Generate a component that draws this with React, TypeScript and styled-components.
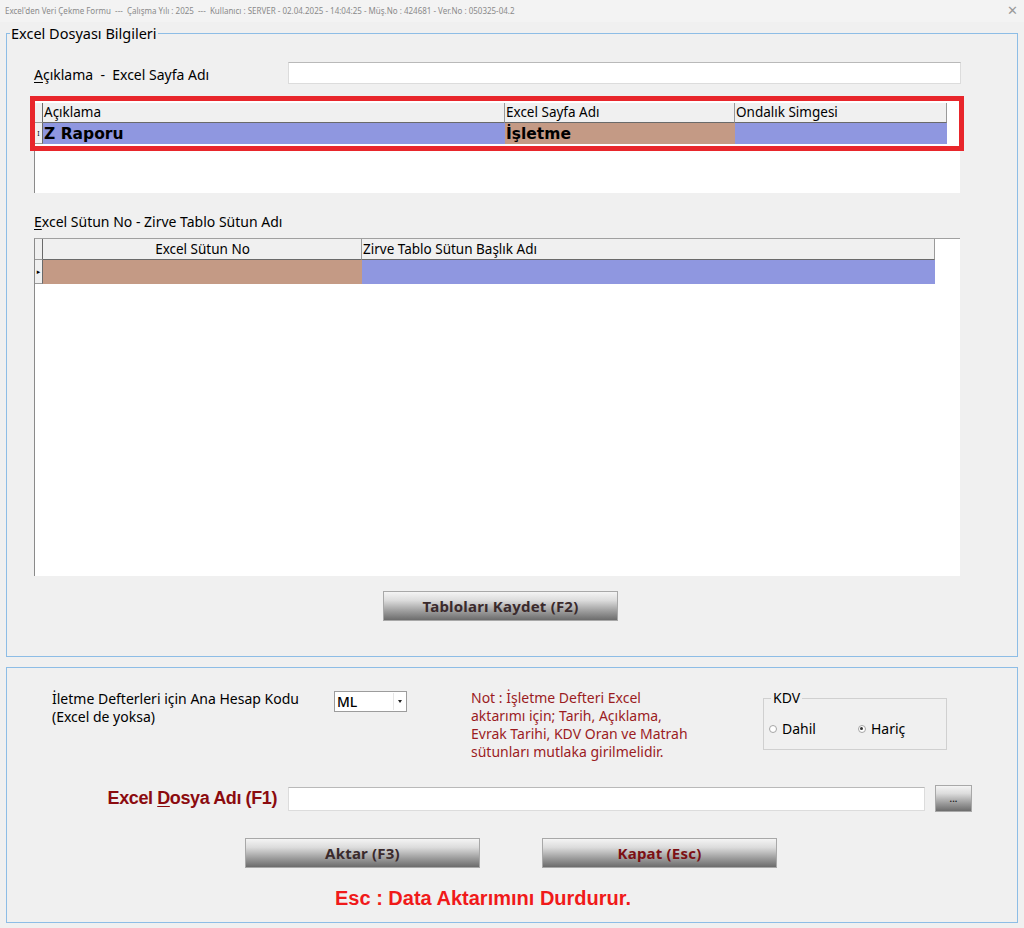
import styled, { createGlobalStyle } from "styled-components";

const GlobalStyle = createGlobalStyle`
  html, body {
    margin: 0;
    padding: 0;
    background: #f0f0f0;
  }
  body {
    font-family: "Noto Sans", "DejaVu Sans", sans-serif;
    color: #000;
  }
`;

const Window = styled.div`
  width: 1024px;
  height: 928px;
  background: #f0f0f0;
  display: flex;
  flex-direction: column;
  overflow: hidden;
`;

const TitleBar = styled.div`
  height: 22px;
  display: flex;
  align-items: center;
  justify-content: space-between;
  padding: 0 6px 2px 5px;
  background: #f3f3f3;
  box-sizing: border-box;
`;

const TitleText = styled.span`
  font-size: 8px;
  color: #8a8a8a;
  white-space: pre;
`;

const CloseX = styled.span`
  font-size: 13px;
  color: #9a9a9a;
  font-family: "DejaVu Sans", sans-serif;
`;

const Content = styled.div`
  padding: 0 6px;
  display: flex;
  flex-direction: column;
`;

const Group = styled.fieldset`
  margin: 2px 0 0 0;
  padding: 0;
  min-width: 0;
  border: 1px solid #8dbde6;
`;

const GroupTitle = styled.legend`
  margin-left: 3px;
  padding: 0 1px;
  font-size: 14.5px;
  line-height: 18px;
  color: #000;
`;

const GroupBody = styled.div`
  padding: 20px 0 35px 27px;
  display: flex;
  flex-direction: column;
`;

const FieldRow = styled.div`
  display: flex;
  align-items: center;
`;

const Label = styled.span<{ $w?: number }>`
  font-size: 14px;
  line-height: 18px;
  width: ${(p) => (p.$w ? `${p.$w}px` : "auto")};
  flex-shrink: 0;
  u {
    text-decoration: underline;
    text-underline-offset: 2px;
  }
`;

const TextBox = styled.div<{ $w: number; $h?: number }>`
  width: ${(p) => p.$w}px;
  height: ${(p) => p.$h ?? 22}px;
  background: #fff;
  border: 1px solid #dcdcdc;
  border-top-color: #b9b9b9;
  box-sizing: border-box;
  flex-shrink: 0;
`;

const GridBox = styled.div<{ $h: number; $top?: boolean }>`
  position: relative;
  width: 926px;
  height: ${(p) => p.$h}px;
  background: #fff;
  border-left: 1px solid #8a8a8a;
  border-top: ${(p) => (p.$top ? "1px solid #a0a0a0" : "1px solid transparent")};
  box-sizing: border-box;
  padding-top: ${(p) => (p.$top ? 0 : 2)}px;
`;

const GridRow = styled.div`
  display: flex;
`;

const HeadCell = styled.div<{ $w: number; $h: number; $center?: boolean }>`
  width: ${(p) => p.$w}px;
  height: ${(p) => p.$h}px;
  box-sizing: border-box;
  background: #f0f0f0;
  border-right: 1px solid #9a9a9a;
  border-bottom: 1px solid #6a6a6a;
  font-size: 13.5px;
  line-height: ${(p) => p.$h - 1}px;
  padding-left: 1px;
  text-align: ${(p) => (p.$center ? "center" : "left")};
  white-space: nowrap;
  overflow: hidden;
`;

const DataCell = styled.div<{ $w: number; $h: number; $bg: string }>`
  width: ${(p) => p.$w}px;
  height: ${(p) => p.$h}px;
  box-sizing: border-box;
  background: ${(p) => p.$bg};
  font-family: "DejaVu Sans", sans-serif;
  font-weight: bold;
  font-size: 15.5px;
  line-height: ${(p) => p.$h + 2}px;
  padding-left: 1px;
  white-space: nowrap;
  overflow: hidden;
`;

const Indicator = styled.div<{ $w: number; $h: number }>`
  width: ${(p) => p.$w}px;
  height: ${(p) => p.$h}px;
  box-sizing: border-box;
  background: #f0f0f0;
  border-right: 1px solid #6a6a6a;
  border-bottom: 1px solid #9a9a9a;
  display: flex;
  align-items: center;
  justify-content: center;
  font-size: 7px;
  color: #000;
`;

const Highlight = styled.div`
  position: absolute;
  left: -5px;
  top: -5px;
  width: 934px;
  height: 55px;
  border: 5px solid #e8262b;
  box-sizing: border-box;
  pointer-events: none;
`;

const ButtonRow = styled.div<{ $gap: number; $left: number }>`
  display: flex;
  gap: ${(p) => p.$gap}px;
  padding-left: ${(p) => p.$left}px;
`;

const GrayButton = styled.div<{ $w: number; $h?: number; $color?: string }>`
  width: ${(p) => p.$w}px;
  height: ${(p) => p.$h ?? 30}px;
  box-sizing: border-box;
  border: 1px solid #a8a8a8;
  background: linear-gradient(#f4f4f4 0%, #dcdcdc 30%, #9a9a9a 70%, #6c6c6c 100%);
  display: flex;
  align-items: center;
  justify-content: center;
  font-weight: bold;
  font-size: 15px;
  letter-spacing: 0.2px;
  color: ${(p) => p.$color ?? "#3a2a2c"};
  flex-shrink: 0;
`;

const Panel = styled.div`
  margin-top: 10px;
  height: 256px;
  border: 1px solid #8dbde6;
  box-sizing: border-box;
  display: flex;
  flex-direction: column;
  padding-top: 21px;
`;

const TopRow = styled.div`
  display: flex;
  align-items: flex-start;
  padding-left: 45px;
`;

const ComboBox = styled.div`
  width: 73px;
  height: 21px;
  margin-top: 2px;
  background: #fff;
  border: 1px solid #9c9c9c;
  box-sizing: border-box;
  display: flex;
  align-items: center;
  justify-content: space-between;
  font-size: 14px;
  font-weight: 500;
  padding-left: 2px;
  flex-shrink: 0;
`;

const ComboArrow = styled.span`
  width: 11px;
  height: 17px;
  margin-right: 1px;
  border-left: 1px solid #e6e6e6;
  display: flex;
  align-items: center;
  justify-content: center;
  &::after {
    content: "";
    border-left: 2px solid transparent;
    border-right: 2px solid transparent;
    border-top: 3px solid #222;
  }
`;

const Note = styled.div`
  margin-left: 64px;
  width: 292px;
  font-size: 14px;
  line-height: 18px;
  color: #9b1c1f;
  flex-shrink: 0;
`;

const KdvBox = styled.fieldset`
  margin: 1px 0 0 0;
  padding: 0;
  width: 184px;
  height: 60px;
  box-sizing: border-box;
  border: 1px solid #d0d0d0;
  min-width: 0;
`;

const KdvTitle = styled.legend`
  margin-left: 7px;
  padding: 0 2px;
  font-size: 14px;
  line-height: 16px;
`;

const RadioRow = styled.div`
  display: flex;
  padding: 13px 0 0 5px;
  gap: 42px;
`;

const RadioItem = styled.label`
  display: flex;
  align-items: center;
  gap: 5px;
  font-size: 14px;
`;

const RadioDot = styled.span<{ $on?: boolean }>`
  width: 6px;
  height: 6px;
  border-radius: 50%;
  border: 1px solid #a5a5a5;
  background: #fff;
  position: relative;
  &::after {
    content: "";
    display: ${(p) => (p.$on ? "block" : "none")};
    position: absolute;
    left: 1.5px;
    top: 1.5px;
    width: 3px;
    height: 3px;
    border-radius: 50%;
    background: #333;
  }
`;

const FileRow = styled.div`
  display: flex;
  align-items: center;
  margin-top: 24px;
`;

const FileLabel = styled.span`
  width: 281px;
  padding-right: 11px;
  text-align: right;
  box-sizing: border-box;
  font-family: "Liberation Sans", Arial, sans-serif;
  font-weight: bold;
  font-size: 18px;
  letter-spacing: -0.4px;
  color: #8b0b0f;
  flex-shrink: 0;
  u {
    text-underline-offset: 2px;
  }
`;

const Browse = styled(GrayButton)`
  margin-left: 10px;
  font-size: 9px;
  color: #222;
`;

const StopText = styled.div`
  margin-top: 19px;
  padding-left: 328px;
  font-family: "Liberation Sans", Arial, sans-serif;
  font-weight: bold;
  font-size: 20px;
  color: #f01a1a;
`;

export default function App() {
  return (
    <Window>
      <GlobalStyle />
      <TitleBar>
        <TitleText>
          {"Excel'den Veri Çekme Formu  ---  Çalışma Yılı : 2025  ---  Kullanıcı : SERVER - 02.04.2025 - 14:04:25 - Müş.No : 424681 - Ver.No : 050325-04.2"}
        </TitleText>
        <CloseX>✕</CloseX>
      </TitleBar>
      <Content>
        <Group>
          <GroupTitle>Excel Dosyası Bilgileri</GroupTitle>
          <GroupBody>
            <FieldRow>
              <Label $w={254} style={{ marginTop: 3 }}>
                <u>A</u>çıklama &nbsp;- &nbsp;Excel Sayfa Adı
              </Label>
              <TextBox $w={673} />
            </FieldRow>

            <div style={{ marginTop: 16 }}>
              <GridBox $h={93}>
                <GridRow>
                  <Indicator $w={8} $h={20} />
                  <HeadCell $w={462} $h={20}>Açıklama</HeadCell>
                  <HeadCell $w={230} $h={20}>Excel Sayfa Adı</HeadCell>
                  <HeadCell $w={212} $h={20}>Ondalık Simgesi</HeadCell>
                </GridRow>
                <GridRow>
                  <Indicator $w={8} $h={21}>I</Indicator>
                  <DataCell $w={462} $h={21} $bg="#8f97e0">Z Raporu</DataCell>
                  <DataCell $w={230} $h={21} $bg="#c49a85">İşletme</DataCell>
                  <DataCell $w={212} $h={21} $bg="#8f97e0" />
                </GridRow>
                <Highlight />
              </GridBox>
            </div>

            <Label style={{ marginTop: 20 }}>
              <u>E</u>xcel Sütun No - Zirve Tablo Sütun Adı
            </Label>

            <div style={{ marginTop: 7 }}>
              <GridBox $h={338} $top>
                <GridRow>
                  <Indicator $w={8} $h={21} />
                  <HeadCell $w={319} $h={21} $center>Excel Sütun No</HeadCell>
                  <HeadCell $w={573} $h={21}>Zirve Tablo Sütun Başlık Adı</HeadCell>
                </GridRow>
                <GridRow>
                  <Indicator $w={8} $h={24}>▸</Indicator>
                  <DataCell $w={319} $h={24} $bg="#c49a85" />
                  <DataCell $w={573} $h={24} $bg="#8f97e0" />
                </GridRow>
              </GridBox>
            </div>

            <ButtonRow $gap={0} $left={349} style={{ marginTop: 15 }}>
              <GrayButton $w={235}>Tabloları Kaydet (F2)</GrayButton>
            </ButtonRow>
          </GroupBody>
        </Group>

        <Panel>
          <TopRow>
            <Label $w={282} style={{ marginTop: 1 }}>
              İletme Defterleri için Ana Hesap Kodu
              <br />
              (Excel de yoksa)
            </Label>
            <ComboBox>
              ML
              <ComboArrow />
            </ComboBox>
            <Note>
              Not : İşletme Defteri Excel
              <br />
              aktarımı için; Tarih, Açıklama,
              <br />
              Evrak Tarihi, KDV Oran ve Matrah
              <br />
              sütunları mutlaka girilmelidir.
            </Note>
            <KdvBox>
              <KdvTitle>KDV</KdvTitle>
              <RadioRow>
                <RadioItem>
                  <RadioDot />
                  Dahil
                </RadioItem>
                <RadioItem>
                  <RadioDot $on />
                  Hariç
                </RadioItem>
              </RadioRow>
            </KdvBox>
          </TopRow>

          <FileRow>
            <FileLabel>
              Excel <u>D</u>osya Adı (F1)
            </FileLabel>
            <TextBox $w={637} $h={24} />
            <Browse $w={37} $h={27}>...</Browse>
          </FileRow>

          <ButtonRow $gap={62} $left={238} style={{ marginTop: 26 }}>
            <GrayButton $w={235}>Aktar (F3)</GrayButton>
            <GrayButton $w={235} $color="#7c1014">Kapat (Esc)</GrayButton>
          </ButtonRow>

          <StopText>Esc : Data Aktarımını Durdurur.</StopText>
        </Panel>
      </Content>
    </Window>
  );
}
